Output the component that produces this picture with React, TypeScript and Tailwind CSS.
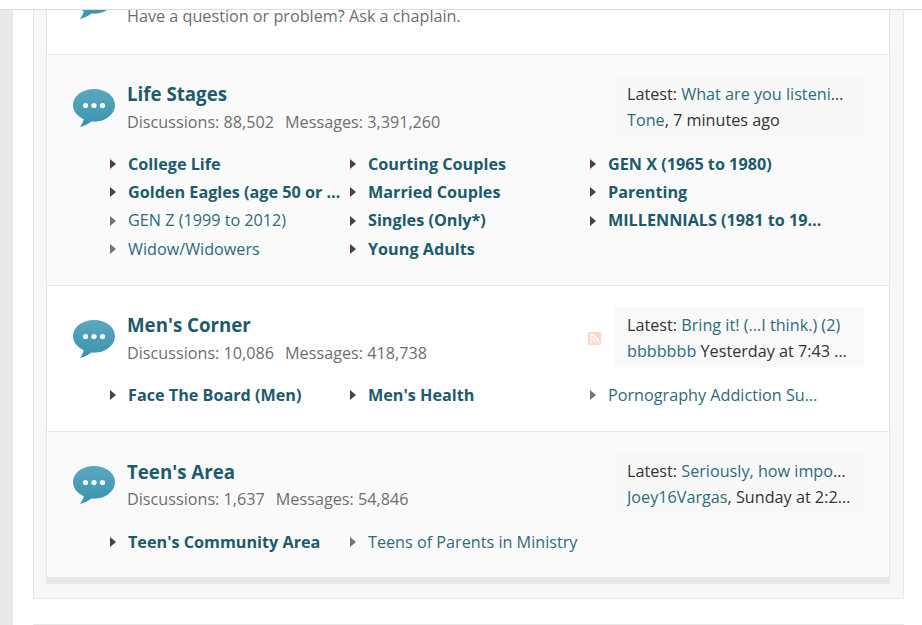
import clsx from 'clsx'
import { FaRssSquare } from 'react-icons/fa'

type Sub = { name: string; bold?: boolean }

type Forum = {
  title: string
  discussions: string
  messages: string
  latest: React.ReactNode
  by: React.ReactNode
  subs: Sub[]
  alt?: boolean
  rss?: boolean
}

const A = ({ children }: { children: React.ReactNode }) => <span className="text-[#2c6b80]">{children}</span>

const forums: Forum[] = [
  {
    title: 'Life Stages',
    discussions: '88,502',
    messages: '3,391,260',
    alt: true,
    latest: <A>What are you listening to right now?</A>,
    by: (
      <>
        <A>Tone</A>, 7 minutes ago
      </>
    ),
    subs: [
      { name: 'College Life', bold: true },
      { name: 'Courting Couples', bold: true },
      { name: 'GEN X (1965 to 1980)', bold: true },
      { name: 'Golden Eagles (age 50 or older)', bold: true },
      { name: 'Married Couples', bold: true },
      { name: 'Parenting', bold: true },
      { name: 'GEN Z (1999 to 2012)' },
      { name: 'Singles (Only*)', bold: true },
      { name: 'MILLENNIALS (1981 to 1998)', bold: true },
      { name: 'Widow/Widowers' },
      { name: 'Young Adults', bold: true },
    ],
  },
  {
    title: "Men's Corner",
    discussions: '10,086',
    messages: '418,738',
    rss: true,
    latest: <A>Bring it! (...I think.) (2)</A>,
    by: (
      <>
        <A>bbbbbbb</A> Yesterday at 7:43 PM
      </>
    ),
    subs: [
      { name: 'Face The Board (Men)', bold: true },
      { name: "Men's Health", bold: true },
      { name: 'Pornography Addiction Support' },
    ],
  },
  {
    title: "Teen's Area",
    discussions: '1,637',
    messages: '54,846',
    alt: true,
    latest: <A>Seriously, how important is it?</A>,
    by: (
      <>
        <A>Joey16Vargas</A>, Sunday at 2:22 PM
      </>
    ),
    subs: [
      { name: "Teen's Community Area", bold: true },
      { name: 'Teens of Parents in Ministry' },
    ],
  },
]

function Bubble({ id }: { id: string }) {
  return (
    <svg width="44" height="40" viewBox="0 0 44 40" className="block shrink-0">
      <defs>
        <linearGradient id={id} x1="0" y1="0" x2="0" y2="1">
          <stop offset="0" stopColor="#5aa8bf" />
          <stop offset="1" stopColor="#3b93ad" />
        </linearGradient>
      </defs>
      <path
        d="M22 1C10.400 1 1 7.900 1 17c0 6.400 4.400 11.300 10.800 14.200-.7 2.700-1.900 5-3.800 7.800 4.400-.8 8.300-2.900 11.500-5.400.8.100 1.700.1 2.500.1 11.600 0 21-7.500 21-16.700S33.600 1 22 1z"
        fill={`url(#${id})`}
      />
      <circle cx="13.500" cy="17.500" r="2.600" fill="#fff" />
      <circle cx="22" cy="17.500" r="2.600" fill="#fff" />
      <circle cx="30.500" cy="17.500" r="2.600" fill="#fff" />
    </svg>
  )
}

function Arrow({ dim }: { dim: boolean }) {
  return (
    <span
      className={clsx(
        'mr-[12px] h-0 w-0 shrink-0 border-y-[5px] border-l-[6px] border-y-transparent',
        dim ? 'border-l-[#7a7272]' : 'border-l-[#5a3a42]',
      )}
    />
  )
}

function Row({ f, i }: { f: Forum; i: number }) {
  const last = i === forums.length - 1
  return (
    <div className={clsx('border-t border-[#e6e6e6] pl-[25px] pr-[25px] pt-[21px]', last ? 'pb-[21px]' : 'pb-[22px]', f.alt ? 'bg-[#fafafa]' : 'bg-white')}>
      <div className="flex items-start">
        <div className="mt-[12px] w-[55px] shrink-0">
          <Bubble id={`bubble-${i}`} />
        </div>
        <div className={clsx('min-w-0 flex-1', last ? 'pt-[5px]' : 'pt-[4px]')}>
          <h3 className="text-[18.700px] font-bold leading-[28px] text-[#1d5a6b]">{f.title}</h3>
          <div className={clsx('flex gap-[11px] text-[16.200px] leading-[26px] text-[#6e6e6e]', !last && 'mt-[1px]')}>
            <span>Discussions: {f.discussions}</span>
            <span>Messages: {f.messages}</span>
          </div>
        </div>
        {f.rss && <FaRssSquare className="mr-[12px] mt-[24px] text-[15px] text-[#ffd9c6]" />}
        <div className={clsx('w-[250px] shrink-0 pb-[3px] pl-[13px] pr-[13px] pt-[5px] text-[16.200px] leading-[26px] text-[#333]', f.alt ? 'bg-[#f8f8f8]' : 'bg-[#f9f9f9]')}>
          <div className="truncate">
            Latest: {f.latest}
          </div>
          <div className="truncate">{f.by}</div>
        </div>
      </div>
      <ul className={clsx('ml-[38px] grid grid-cols-[240px_240px_240px] text-[16.200px] leading-[28.200px]', last ? 'mt-[15px]' : 'mt-[14px]')}>
        {f.subs.map((s) => (
          <li key={s.name} className="flex items-center">
            <Arrow dim={!s.bold} />
            <span className={clsx('w-[214px] truncate', s.bold ? 'font-bold text-[#1d5a6b]' : 'text-[#2f6a7c]')}>{s.name}</span>
          </li>
        ))}
      </ul>
    </div>
  )
}

export default function App() {
  return (
    <div className="flex h-[625px] w-[922px] flex-col overflow-hidden bg-white font-['Open_Sans',sans-serif]">
      <div className="h-[10px] shrink-0 border-b border-[#dcdcdc] bg-white" />
      <div className="flex min-h-0 flex-1">
        <div className="w-[13px] shrink-0 bg-[#e8e8e8]" />
        <div className="min-w-0 flex-1 pl-[20px] pr-[18px]">
          <div className="border-x border-b border-[#e8e8e8] bg-[#f7f7f7] pb-[14px] pl-[12px] pr-[13px]">
            <div className="overflow-hidden rounded-b-[3px] border-x border-b border-[#e6e6e6]">
              {/* previous forum, scrolled mostly out of the window */}
              <div className="h-[44px] overflow-hidden bg-white pl-[25px]">
                <div className="flex items-start">
                  <div className="relative h-[10px] w-[55px] shrink-0 overflow-hidden">
                    <div className="absolute bottom-0 left-0">
                      <Bubble id="bubble-top" />
                    </div>
                  </div>
                  <p className="text-[16.200px] leading-[12px] text-[#6e6e6e]">Have a question or problem? Ask a chaplain.</p>
                </div>
              </div>
              {forums.map((f, i) => (
                <Row key={f.title} f={f} i={i} />
              ))}
            </div>
            <div className="h-[6px] bg-[#e8e8e8]" />
          </div>
          <div className="mt-[25px] border-t border-[#e8e8e8]" />
        </div>
      </div>
    </div>
  )
}
